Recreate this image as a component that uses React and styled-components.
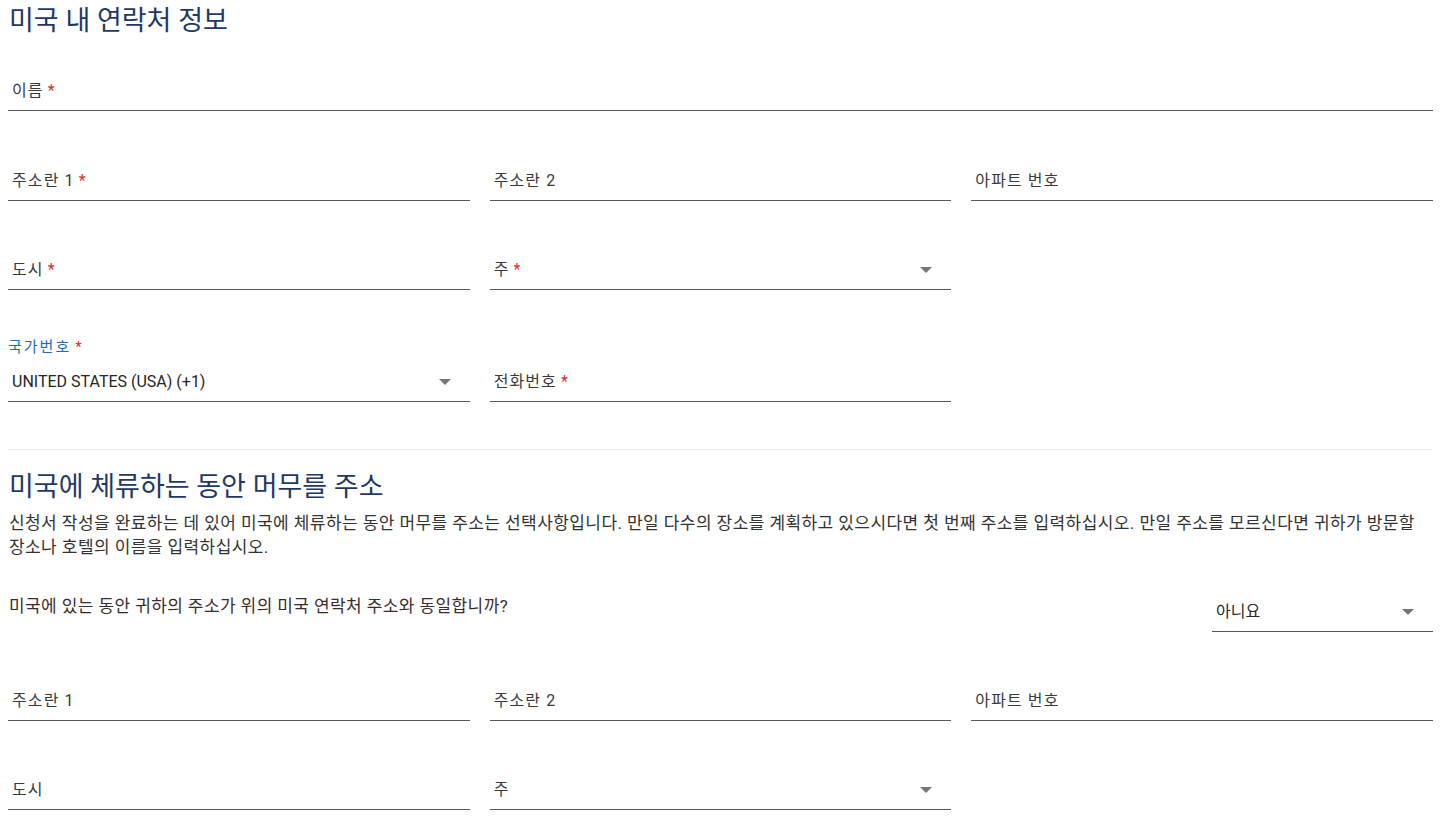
import React from 'react';
import styled, { createGlobalStyle } from 'styled-components';

const GlobalStyle = createGlobalStyle`
  body {
    margin: 0;
    background: #fff;
    font-family: Roboto, "Noto Sans CJK KR", "Noto Sans", sans-serif;
  }
`;

// page wrapper, right side leaves room like the original scroll area
const Page = styled.div`
  display: flex;
  flex-direction: column;
  padding: 4px 18px 0 8px;
`;

const Heading = styled.h2`
  margin: 0;
  padding-left: 1px;
  font-weight: 400;
  font-size: 27px;
  line-height: ${(p) => (p.$small ? '32px' : '34px')};
  color: #1f3966;
  margin-top: ${(p) => p.$top || 0}px;
`;

const Row = styled.div`
  display: grid;
  grid-template-columns: repeat(3, 1fr);
  column-gap: 20px;
  align-items: end;
  margin-top: ${(p) => p.$top}px;
`;

const Full = styled.div`
  margin-top: ${(p) => p.$top}px;
`;

const FieldBox = styled.div`
  display: flex;
  flex-direction: column;
`;

const FloatLabel = styled.div`
  font-size: 15px;
  line-height: 20px;
  letter-spacing: 2px;
  color: #1b6ac0;
  margin-bottom: 7px;
`;

const InputRow = styled.div`
  display: flex;
  align-items: center;
  justify-content: space-between;
  padding: 6px ${(p) => (p.$select ? '19px' : '4px')} 7px 4px;
  font-size: 16px;
  line-height: 24px;
  letter-spacing: ${(p) => (p.$value ? '0' : '1.1px')};
  color: ${(p) => (p.$value ? '#262626' : '#3a3a3a')};
  border-bottom: 1px solid #5a5a5a;
`;

const Star = styled.span`
  color: #d32f2f;
  margin-left: 4px;
  letter-spacing: 0;
`;

const Arrow = styled.span`
  width: 0;
  height: 0;
  border-left: 6px solid transparent;
  border-right: 6px solid transparent;
  border-top: 6px solid #767676;
`;

const Divider = styled.div`
  height: 1px;
  background: #ececec;
  margin-top: 47px;
`;

const Paragraph = styled.p`
  margin: 8px 0 0;
  padding-left: 1px;
  font-size: 17px;
  line-height: 24px;
  letter-spacing: 0.42px;
  word-break: keep-all;
  color: #333;
`;

const QuestionRow = styled.div`
  display: flex;
  justify-content: space-between;
  align-items: flex-start;
  margin-top: 35px;
`;

const Question = styled.div`
  padding-left: 1px;
  font-size: 17px;
  line-height: 24px;
  letter-spacing: 0.4px;
  color: #3a2c2d;
`;

const SmallSelect = styled.div`
  width: 221px;
`;

function Field({ label, required, select, floatLabel, value }) {
  return (
    <FieldBox>
      {floatLabel && (
        <FloatLabel>
          {floatLabel}
          {required && <Star>*</Star>}
        </FloatLabel>
      )}
      <InputRow $select={select} $value={!!value}>
        <span>
          {value || label}
          {!floatLabel && required && <Star>*</Star>}
        </span>
        {select && <Arrow />}
      </InputRow>
    </FieldBox>
  );
}

export default function App() {
  return (
    <>
      <GlobalStyle />
      <Page>
        <Heading>미국 내 연락처 정보</Heading>

        <Full $top={35}>
          <Field label="이름" required />
        </Full>

        <Row $top={52}>
          <Field label="주소란 1" required />
          <Field label="주소란 2" />
          <Field label="아파트 번호" />
        </Row>

        <Row $top={51}>
          <Field label="도시" required />
          <Field label="주" required select />
          <div />
        </Row>

        <Row $top={47}>
          <Field floatLabel="국가번호" required select value="UNITED STATES (USA) (+1)" />
          <Field label="전화번호" required />
          <div />
        </Row>

        <Divider />

        <Heading $small $top={21}>미국에 체류하는 동안 머무를 주소</Heading>
        <Paragraph>
          신청서 작성을 완료하는 데 있어 미국에 체류하는 동안 머무를 주소는 선택사항입니다. 만일 다수의 장소를 계획하고 있으시다면 첫 번째 주소를 입력하십시오. 만일 주소를 모르신다면 귀하가 방문할 장소나 호텔의 이름을 입력하십시오.
        </Paragraph>

        <QuestionRow>
          <Question>미국에 있는 동안 귀하의 주소가 위의 미국 연락처 주소와 동일합니까?</Question>
          <SmallSelect>
            <Field select value="아니요" />
          </SmallSelect>
        </QuestionRow>

        <Row $top={51}>
          <Field label="주소란 1" />
          <Field label="주소란 2" />
          <Field label="아파트 번호" />
        </Row>

        <Row $top={51}>
          <Field label="도시" />
          <Field label="주" select />
          <div />
        </Row>
      </Page>
    </>
  );
}
